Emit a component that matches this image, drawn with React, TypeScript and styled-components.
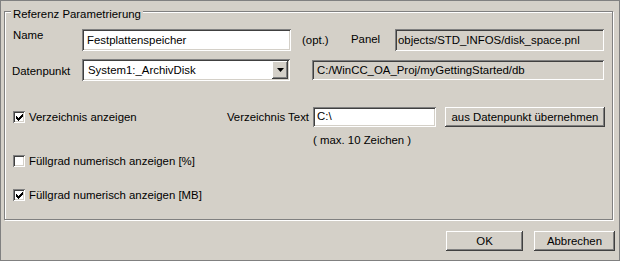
import { FC } from 'react';
import styled, { createGlobalStyle } from 'styled-components';

const GlobalStyle = createGlobalStyle`
  html, body {
    margin: 0;
    padding: 0;
    background: #d4d0c8;
  }
  * {
    box-sizing: border-box;
  }
`;

const Window = styled.div`
  width: 620px;
  height: 261px;
  border: 1px solid #808080;
  padding: 0 4px 0 3px;
  background: #d4d0c8;
  display: flex;
  flex-direction: column;
  font-family: 'Liberation Sans', Arial, sans-serif;
  font-size: 11.4px;
  line-height: 14px;
  color: #000;
`;

const GroupBox = styled.div`
  margin-top: 10px;
  width: 609px;
  height: 209px;
  border: 1px solid #808080;
  box-shadow: 1px 1px 0 #fff, inset 1px 1px 0 #fff;
  display: flex;
  flex-direction: column;
`;

const Caption = styled.div`
  align-self: flex-start;
  margin: -5px 0 0 6px;
  padding: 0 2px;
  background: #d4d0c8;
`;

const Row = styled.div<{ $top: number; $left?: number; $center?: boolean }>`
  display: flex;
  align-items: ${p => (p.$center ? 'center' : 'flex-start')};
  margin-top: ${p => p.$top}px;
  padding-left: ${p => p.$left ?? 8}px;
`;

const Label = styled.div<{ $w?: number; $dy?: number; $ml?: number; $right?: boolean }>`
  width: ${p => (p.$w ? `${p.$w}px` : 'auto')};
  margin-top: ${p => p.$dy ?? 0}px;
  margin-left: ${p => p.$ml ?? 0}px;
  text-align: ${p => (p.$right ? 'right' : 'left')};
  white-space: nowrap;
  flex-shrink: 0;
`;

const sunken = `
  box-shadow: inset 1px 1px 0 #808080, inset -1px -1px 0 #fff,
    inset 2px 2px 0 #404040, inset -2px -2px 0 #d4d0c8;
`;

const raised = `
  box-shadow: inset -1px -1px 0 #404040, inset 1px 1px 0 #fff,
    inset -2px -2px 0 #808080, inset 2px 2px 0 #d4d0c8;
`;

const Field = styled.div<{ $w: number; $h: number; $ml?: number; $dy?: number; $pt: number; $pl: number; $readOnly?: boolean }>`
  position: relative;
  width: ${p => p.$w}px;
  height: ${p => p.$h}px;
  margin-left: ${p => p.$ml ?? 0}px;
  margin-top: ${p => p.$dy ?? 0}px;
  padding: ${p => p.$pt}px 0 0 ${p => p.$pl}px;
  background: ${p => (p.$readOnly ? '#d4d0c8' : '#fff')};
  ${sunken}
  white-space: nowrap;
  overflow: hidden;
  flex-shrink: 0;
`;

const DropButton = styled.div`
  position: absolute;
  top: 2px;
  right: 2px;
  width: 16px;
  height: 18px;
  background: #d4d0c8;
  ${raised}
  display: flex;
  align-items: center;
  justify-content: center;
`;

const Button = styled.button<{ $w: number; $ml?: number }>`
  width: ${p => p.$w}px;
  height: 20px;
  margin-left: ${p => p.$ml ?? 0}px;
  padding: 0;
  border: none;
  background: #d4d0c8;
  ${raised}
  font: inherit;
  color: #000;
  flex-shrink: 0;
`;

const CheckItem = styled.label<{ $w?: number }>`
  display: flex;
  align-items: center;
  gap: 4px;
  width: ${p => (p.$w ? `${p.$w}px` : 'auto')};
  flex-shrink: 0;
  white-space: nowrap;
`;

const Box = styled.span`
  width: 12px;
  height: 12px;
  background: #fff;
  ${sunken}
  display: flex;
  align-items: center;
  justify-content: center;
`;

const Footer = styled.div`
  display: flex;
  justify-content: flex-end;
  margin-top: 11px;
`;

const CheckBox: FC<{ checked?: boolean; label: string; w?: number }> = ({ checked, label, w }) => (
  <CheckItem $w={w}>
    <Box>
      {checked && (
        <svg width="7" height="7" viewBox="0 0 7 7" shapeRendering="crispEdges">
          <path
            d="M6 0h1v1h-1zM5 1h2v1h-2zM0 2h1v1h-1zM4 2h3v1h-3zM0 3h2v1h-2zM3 3h3v1h-3zM0 4h5v1h-5zM1 5h3v1h-3zM2 6h1v1h-1z"
            fill="#000"
          />
        </svg>
      )}
    </Box>
    {label}
  </CheckItem>
);

export default function App() {
  return (
    <>
      <GlobalStyle />
      <Window>
        <GroupBox>
          <Caption>Referenz Parametrierung</Caption>
          <Row $top={8}>
            <Label $w={69} $dy={-1}>Name</Label>
            <Field $w={209} $h={22} $pt={4} $pl={5}>Festplattenspeicher</Field>
            <Label $w={49} $dy={4} $ml={11}>(opt.)</Label>
            <Label $w={44} $dy={3}>Panel</Label>
            <Field $w={209} $h={22} $pt={4} $pl={3} $readOnly>objects/STD_INFOS/disk_space.pnl</Field>
          </Row>
          <Row $top={8} $left={7}>
            <Label $w={70} $dy={5}>Datenpunkt</Label>
            <Field $w={208} $h={22} $pt={4} $pl={6}>
              System1:_ArchivDisk
              <DropButton>
                <svg width="7" height="4" viewBox="0 0 7 4">
                  <polygon points="0,0 7,0 3.5,4" fill="#000" />
                </svg>
              </DropButton>
            </Field>
            <Field $w={292} $h={20} $ml={22} $dy={1} $pt={3} $pl={5} $readOnly>
              C:/WinCC_OA_Proj/myGettingStarted/db
            </Field>
          </Row>
          <Row $top={26} $center>
            <CheckBox checked label="Verzeichnis anzeigen" w={213} />
            <Label $w={83} $right>Verzeichnis Text</Label>
            <Field $w={123} $h={20} $ml={4} $pt={2} $pl={4}>C:\</Field>
            <Button $w={160} $ml={9}>aus Datenpunkt übernehmen</Button>
          </Row>
          <Row $top={6} $left={308}>
            <Label>( max. 10 Zeichen )</Label>
          </Row>
          <Row $top={7} $center>
            <CheckBox label="Füllgrad numerisch anzeigen [%]" />
          </Row>
          <Row $top={20} $center>
            <CheckBox checked label="Füllgrad numerisch anzeigen [MB]" />
          </Row>
        </GroupBox>
        <Footer>
          <Button $w={77}>OK</Button>
          <Button $w={81} $ml={11}>Abbrechen</Button>
        </Footer>
      </Window>
    </>
  );
}
